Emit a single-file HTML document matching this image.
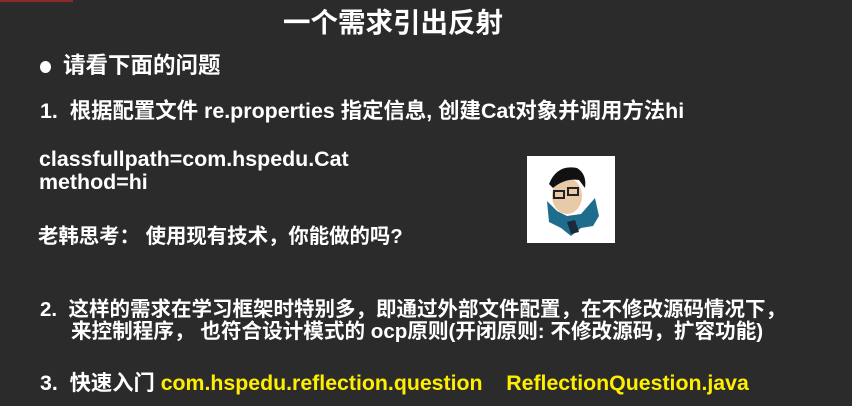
<!DOCTYPE html>
<html><head><meta charset="utf-8"><style>
body{margin:0;width:852px;height:406px;overflow:hidden;background:#2b2b2b;position:relative;font-family:"Liberation Sans","Noto Sans CJK SC",sans-serif;font-weight:bold;color:#fff}
.t{position:absolute;white-space:nowrap;line-height:1}
.y{color:#ffee00}
</style></head><body>
<div style="position:absolute;left:0;top:0;width:73px;height:2px;background:#8a2a2a"></div>
<div class="t" style="left:283px;top:9px;font-size:27.5px">一个需求引出反射</div>
<div style="position:absolute;left:40px;top:61px;width:11px;height:12px;border-radius:50%;background:#fff"></div>
<div class="t" style="left:63px;top:55px;font-size:22.5px">请看下面的问题</div>
<div class="t" style="left:40px;top:101px;font-size:21.4px">1.&nbsp;&nbsp;根据配置文件 re.properties 指定信息, 创建Cat对象并调用方法hi</div>
<div class="t" style="left:39px;top:149px;font-size:21.4px">classfullpath=com.hspedu.Cat</div>
<div class="t" style="left:39px;top:172px;font-size:21.4px">method=hi</div>
<div class="t" style="left:38px;top:227px;font-size:20.4px">老韩思考：&nbsp;使用现有技术，你能做的吗?</div>
<div style="position:absolute;left:527px;top:156px;width:88px;height:87px;background:#fff">
<svg width="88" height="87" viewBox="0 0 88 87">
<path d="M20 45 L30 55 L40 60 L54 58 L68 42 L72 60 L66 70 L54 72 L44 80 L34 72 L22 66 Z" fill="#1f6d8c"/>
<ellipse cx="40" cy="40" rx="15" ry="18" fill="#e8c9a8"/>
<path d="M22 28 Q30 8 50 12 Q60 18 58 32 L52 24 Q38 22 26 32 Z" fill="#111"/>
<rect x="27" y="35" width="10" height="7" fill="none" stroke="#222" stroke-width="2"/>
<rect x="41" y="32" width="10" height="7" fill="none" stroke="#222" stroke-width="2"/>
<path d="M40 66 L48 64 L52 76 L44 78 Z" fill="#1a2a3a"/>
</svg></div>
<div class="t" style="left:40px;top:300px;font-size:20.5px">2.&nbsp;&nbsp;这样的需求在学习框架时特别多，即通过外部文件配置，在不修改源码情况下，</div>
<div class="t" style="left:71px;top:322px;font-size:20.6px">来控制程序，&nbsp;也符合设计模式的 ocp原则(开闭原则: 不修改源码，扩容功能)</div>
<div class="t" style="left:40px;top:373px;font-size:21.3px">3.&nbsp;&nbsp;快速入门 <span class="y">com.hspedu.reflection.question&nbsp;&nbsp;&nbsp; ReflectionQuestion.java</span></div>
</body></html>
